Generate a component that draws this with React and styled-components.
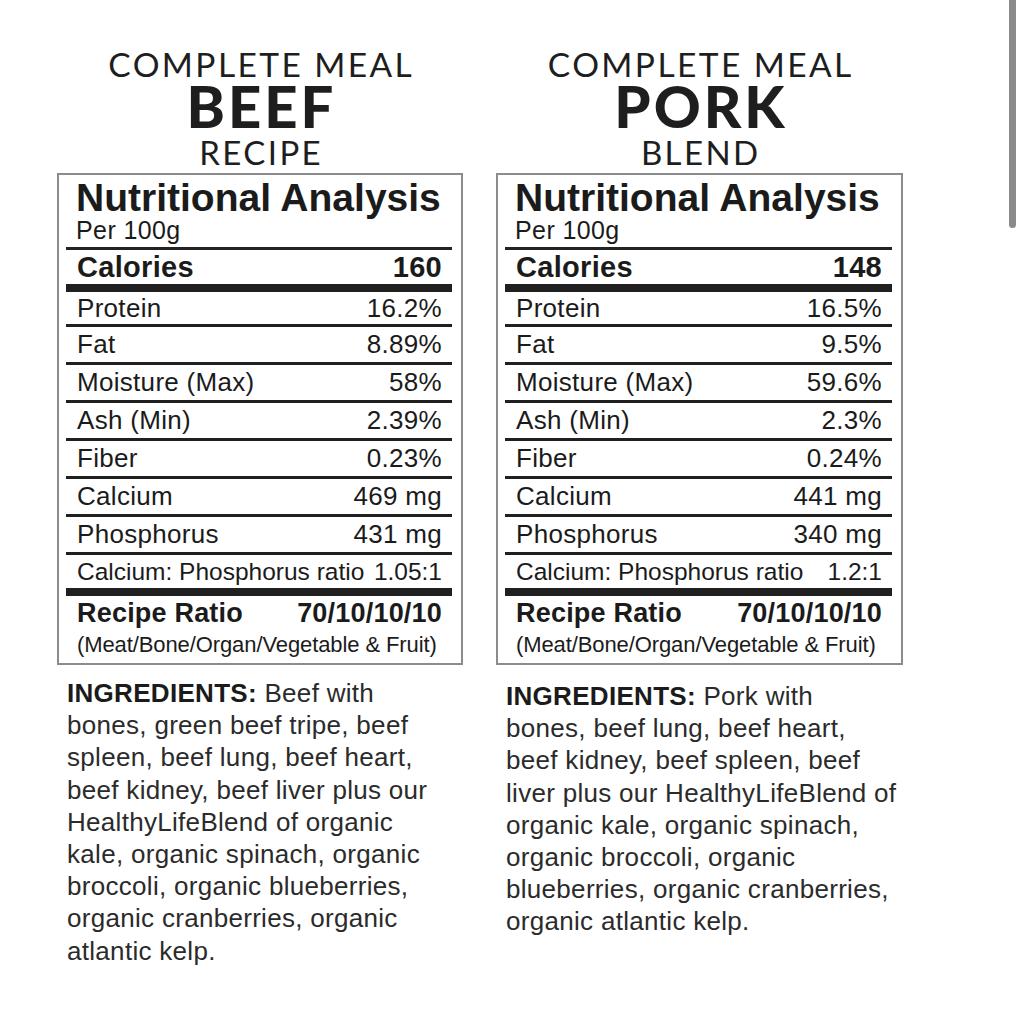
import React from "react";
import styled, { createGlobalStyle } from "styled-components";

const GlobalStyle = createGlobalStyle`
  html, body { margin: 0; padding: 0; background: #ffffff; }
  body { font-family: "Liberation Sans", Arial, Helvetica, sans-serif; color: #1b1b1b; }
`;

const Page = styled.main`
  display: grid;
  grid-template-columns: 406px 407px;
  column-gap: 33px;
  align-items: start;
  padding: 46px 0 0 57px;
  min-height: 1014px;
  box-sizing: border-box;
`;

const Column = styled.section`
  display: flex;
  flex-direction: column;
`;

const Heading = styled.header`
  text-align: center;
  font-family: Lato, "Open Sans", sans-serif;
  color: #1e1e1e;
`;

const Kicker = styled.div`
  font-size: 33.5px;
  line-height: 36px;
  font-weight: 400;
  letter-spacing: 2.4px;
  padding-left: 2.4px;
`;

const Name = styled.div`
  font-size: 58px;
  line-height: 48px;
  font-weight: 900;
  letter-spacing: 3px;
  padding-left: 3px;
`;

const Sub = styled.div`
  font-size: 33px;
  line-height: 36px;
  font-weight: 400;
  margin-top: 4px;
  letter-spacing: 2.4px;
  padding-left: 2.4px;
`;

const Panel = styled.div`
  margin-top: 3px;
  border: 2px solid #8c8c8c;
  padding: 4px 9px 2px 7px;
  background: #fff;
`;

const PanelHead = styled.div`
  padding: 0 10px 4px 10px;
  border-bottom: 3px solid #222;
`;

const PanelTitle = styled.div`
  font-size: 39px;
  line-height: 38px;
  font-weight: 700;
  white-space: nowrap;
`;

const PanelSub = styled.div`
  font-size: 25px;
  line-height: 26px;
  letter-spacing: 0.4px;
`;

const Row = styled.div`
  display: flex;
  justify-content: space-between;
  align-items: center;
  height: ${(p) => p.$h}px;
  line-height: ${(p) => p.$h}px;
  padding: 0 10px 0 11px;
  border-bottom: ${(p) => p.$rule}px solid #202020;
  font-size: ${(p) => p.$size}px;
  font-weight: ${(p) => (p.$bold ? 700 : 400)};
  letter-spacing: ${(p) => p.$ls}px;
  white-space: nowrap;
`;

const RecipeBlock = styled.div`
  padding: 1px 10px 0 11px;
`;

const RecipeLine = styled.div`
  display: flex;
  justify-content: space-between;
  font-size: 27px;
  line-height: 32px;
  font-weight: 700;
  letter-spacing: 0.2px;
`;

const RecipeNote = styled.div`
  font-size: 22px;
  line-height: 32px;
  letter-spacing: -0.1px;
  white-space: nowrap;
`;

const Ingredients = styled.p`
  margin: ${(p) => p.$mt}px 0 0;
  padding-left: 10px;
  font-size: 26px;
  line-height: 32.2px;
  letter-spacing: 0.3px;
  color: #2b2b2b;
`;

const Line = styled.span`
  display: block;
  white-space: nowrap;
`;

const Label = styled.b`
  font-weight: 700;
  color: #1b1b1b;
`;

const ScrollThumb = styled.div`
  position: fixed;
  top: 0;
  right: 8px;
  width: 7px;
  height: 228px;
  background: #8a8a8a;
  border-radius: 0 0 4px 4px;
`;

const products = [
  {
    name: "BEEF",
    sub: "RECIPE",
    calories: "160",
    rows: [
      ["Protein", "16.2%"],
      ["Fat", "8.89%"],
      ["Moisture (Max)", "58%"],
      ["Ash (Min)", "2.39%"],
      ["Fiber", "0.23%"],
      ["Calcium", "469 mg"],
      ["Phosphorus", "431 mg"],
    ],
    ratio: "1.05:1",
    ingTop: 12,
    ingredients: [
      "Beef with",
      "bones, green beef tripe, beef",
      "spleen, beef lung, beef heart,",
      "beef kidney, beef liver plus our",
      "HealthyLifeBlend of organic",
      "kale, organic spinach, organic",
      "broccoli, organic blueberries,",
      "organic cranberries, organic",
      "atlantic kelp.",
    ],
  },
  {
    name: "PORK",
    sub: "BLEND",
    calories: "148",
    rows: [
      ["Protein", "16.5%"],
      ["Fat", "9.5%"],
      ["Moisture (Max)", "59.6%"],
      ["Ash (Min)", "2.3%"],
      ["Fiber", "0.24%"],
      ["Calcium", "441 mg"],
      ["Phosphorus", "340 mg"],
    ],
    ratio: "1.2:1",
    ingTop: 15,
    ingredients: [
      "Pork with",
      "bones, beef lung, beef heart,",
      "beef kidney, beef spleen, beef",
      "liver plus our HealthyLifeBlend of",
      "organic kale, organic spinach,",
      "organic broccoli, organic",
      "blueberries, organic cranberries,",
      "organic atlantic kelp.",
    ],
  },
];

function Product({ p }) {
  return (
    <Column>
      <Heading>
        <Kicker>COMPLETE MEAL</Kicker>
        <Name>{p.name}</Name>
        <Sub>{p.sub}</Sub>
      </Heading>
      <Panel>
        <PanelHead>
          <PanelTitle>Nutritional Analysis</PanelTitle>
          <PanelSub>Per 100g</PanelSub>
        </PanelHead>
        <Row $h={34} $rule={8} $size={29} $bold $ls={0.3}>
          <span>Calories</span>
          <span>{p.calories}</span>
        </Row>
        {p.rows.map(([k, v], i) => (
          <Row key={k} $h={i === 0 ? 32 : 35} $rule={3} $size={26} $ls={0.3}>
            <span>{k}</span>
            <span>{v}</span>
          </Row>
        ))}
        <Row $h={33} $rule={8} $size={24.5} $ls={0}>
          <span>Calcium: Phosphorus ratio</span>
          <span>{p.ratio}</span>
        </Row>
        <RecipeBlock>
          <RecipeLine>
            <span>Recipe Ratio</span>
            <span>70/10/10/10</span>
          </RecipeLine>
          <RecipeNote>(Meat/Bone/Organ/Vegetable &amp; Fruit)</RecipeNote>
        </RecipeBlock>
      </Panel>
      <Ingredients $mt={p.ingTop}>
        {p.ingredients.map((t, i) => (
          <Line key={i}>
            {i === 0 ? <Label>INGREDIENTS: </Label> : null}
            {t}
          </Line>
        ))}
      </Ingredients>
    </Column>
  );
}

export default function App() {
  return (
    <>
      <GlobalStyle />
      <Page>
        {products.map((p) => (
          <Product key={p.name} p={p} />
        ))}
      </Page>
      <ScrollThumb />
    </>
  );
}
